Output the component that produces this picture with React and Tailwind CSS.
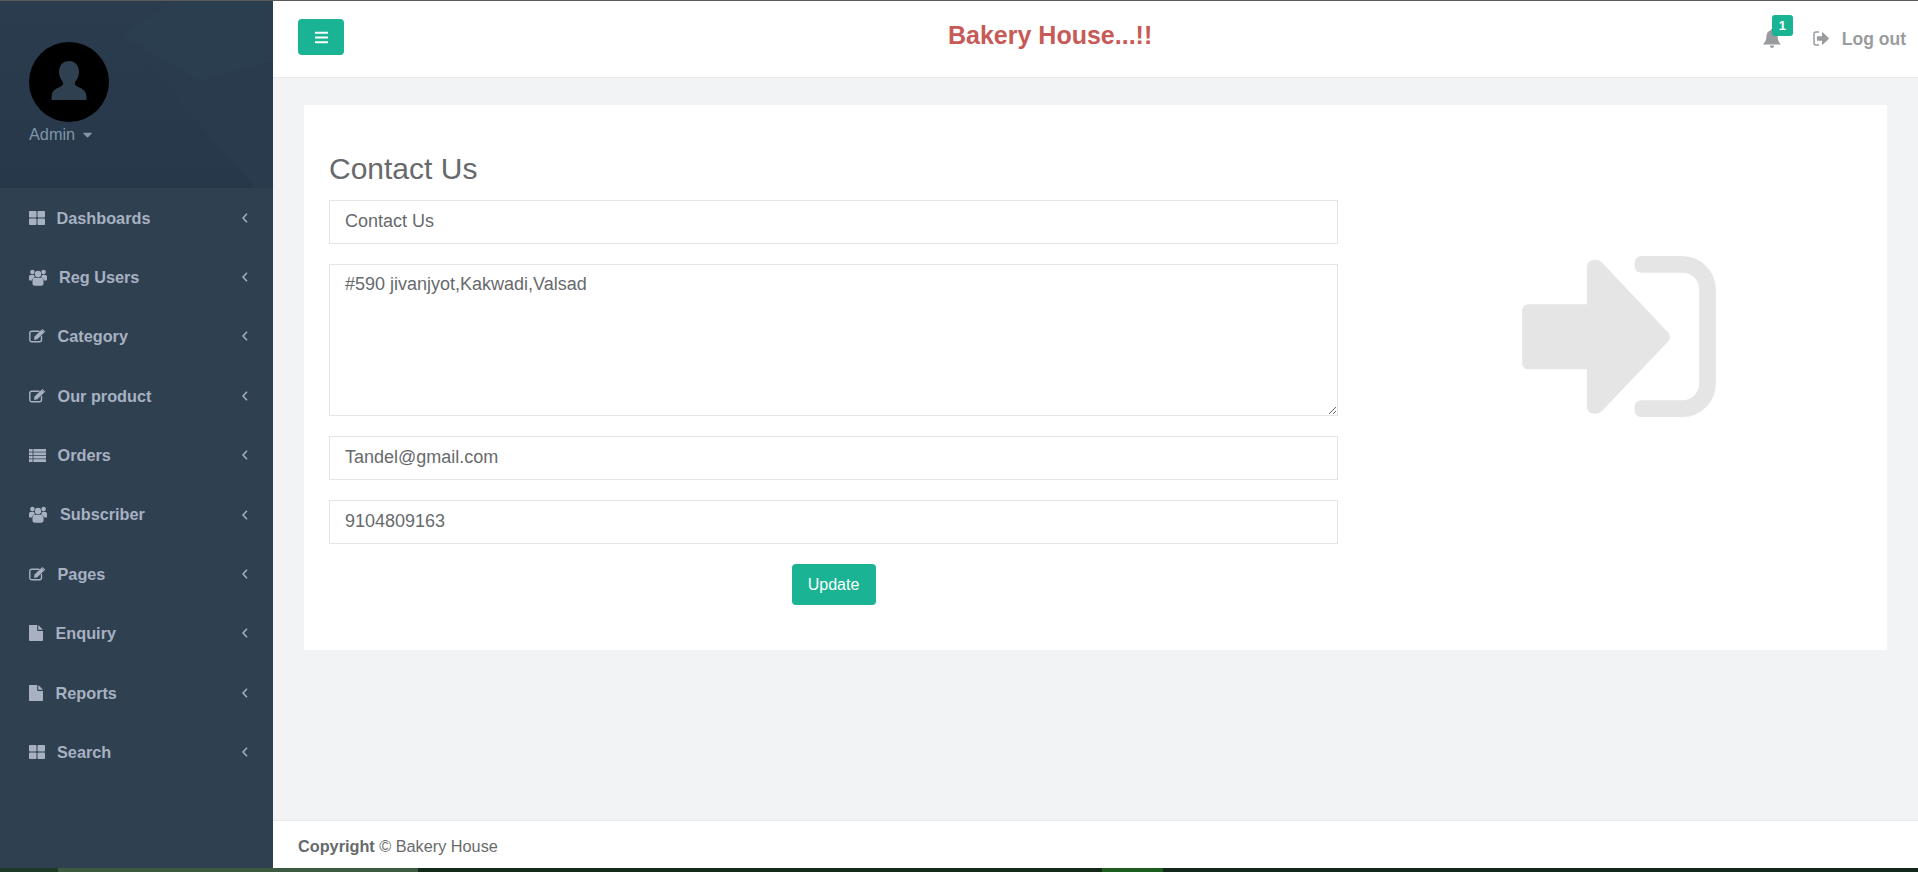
import React from "react";
import { FaThLarge, FaBars, FaCaretDown } from "react-icons/fa";

function UsersIcon() {
  return (
    <svg viewBox="0 0 18 17" className="w-[18px] h-[17px]" fill="currentColor">
      <circle cx="3.4" cy="3.1" r="2.3" />
      <circle cx="14.6" cy="3.1" r="2.3" />
      <circle cx="9" cy="5" r="3.2" />
      <path d="M0 7.6C0 6.6.8 6 1.8 6H5c.1.9.5 1.6 1 2.2-1.7.5-2.7 1.6-3 3.3H1.2C.4 11.5 0 11 0 10.2zM18 7.6c0-1-.8-1.6-1.8-1.6H13c-.1.9-.5 1.6-1 2.2 1.7.5 2.7 1.6 3 3.3h1.8c.8 0 1.2-.5 1.2-1.3z" />
      <path d="M5.8 8.8h6.4c1.6 0 2.3 1.4 2.3 3.4v2.4c0 1.3-.9 2.1-2.1 2.1H5.6c-1.2 0-2.1-.8-2.1-2.1v-2.4c0-2 .7-3.4 2.3-3.4z" />
    </svg>
  );
}

function EditIcon() {
  return (
    <svg viewBox="0 0 17 14" className="w-[17px] h-[14px]" fill="none">
      <path d="M12.5 7.5v3.2c0 1.2-.8 2-2 2H2.8c-1.2 0-2-.8-2-2V4.2c0-1.2.8-2 2-2h7.2" stroke="currentColor" strokeWidth="1.4" strokeLinecap="round" />
      <path d="M5.5 7.6L12.6 .8l2.7 2.6-7 6.9-3.2.6z" fill="currentColor" />
      <path d="M13.4 0l3 2.8-.7.7-3-2.8z" fill="currentColor" />
    </svg>
  );
}

function ListIcon() {
  return (
    <svg viewBox="0 0 17 13" className="w-[17px] h-[13px]" fill="currentColor">
      <rect x="0" y="0" width="3.6" height="2.7" />
      <rect x="4.4" y="0" width="12.6" height="2.7" />
      <rect x="0" y="3.4" width="3.6" height="2.7" />
      <rect x="4.4" y="3.4" width="12.6" height="2.7" />
      <rect x="0" y="6.8" width="3.6" height="2.7" />
      <rect x="4.4" y="6.8" width="12.6" height="2.7" />
      <rect x="0" y="10.2" width="3.6" height="2.8" />
      <rect x="4.4" y="10.2" width="12.6" height="2.8" />
    </svg>
  );
}

function FileIcon() {
  return (
    <svg viewBox="0 0 14 16" className="w-[14px] h-[16px]" fill="currentColor">
      <path d="M.8 0H8.2V5.2C8.2 5.8 8.6 6 9 6H14V15.2C14 15.7 13.7 16 13.2 16H.8C.3 16 0 15.7 0 15.2V.8C0 .3.3 0 .8 0z" />
      <path d="M9.3 0L14 4.8H9.3z" />
    </svg>
  );
}

function BellIcon() {
  return (
    <svg viewBox="0 0 18 19" className="w-[18px] h-[19px]" fill="currentColor">
      <path d="M9 0c.9 0 1.4.6 1.4 1.6 2.8.6 4.1 3 4.2 6 .1 3.400 1 5.400 3.400 7.900H0C2.400 13 3.300 11 3.400 7.600c.1-3 1.400-5.400 4.200-6C7.600.6 8.100 0 9 0z" />
      <path d="M6.800 16.500h4.400c0 1.400-1 2.500-2.200 2.500s-2.200-1.100-2.200-2.500z" />
    </svg>
  );
}

function LogoutIcon() {
  return (
    <svg viewBox="0 0 16 15" className="w-[16px] h-[15px]" fill="none">
      <path d="M5.500 1H3C1.800 1 1 1.800 1 3v9c0 1.200.8 2 2 2h2.500" stroke="currentColor" strokeWidth="1.500" strokeLinecap="round" />
      <path d="M4.500 5.200H9V1.800c0-.5.5-.7.9-.4L15.700 7c.3.300.3.700 0 1l-5.800 5.600c-.4.3-.9.1-.9-.4V9.800H4.500c-.4 0-.6-.3-.6-.6V5.800c0-.3.2-.6.6-.6z" fill="currentColor" />
    </svg>
  );
}

function Chevron() {
  return (
    <svg viewBox="0 0 6 10" className="w-[6px] h-[10px]" fill="none">
      <path d="M5 .8L1 5l4 4.200" stroke="currentColor" strokeWidth="1.500" />
    </svg>
  );
}

const items = [
  { label: "Dashboards", icon: <FaThLarge size={16} />, box: "w-[27.5px]" },
  { label: "Reg Users", icon: <UsersIcon />, box: "w-[30px]" },
  { label: "Category", icon: <EditIcon />, box: "w-[28.5px]" },
  { label: "Our product", icon: <EditIcon />, box: "w-[28.5px]" },
  { label: "Orders", icon: <ListIcon />, box: "w-[28.5px]" },
  { label: "Subscriber", icon: <UsersIcon />, box: "w-[31px]" },
  { label: "Pages", icon: <EditIcon />, box: "w-[28.5px]" },
  { label: "Enquiry", icon: <FileIcon />, box: "w-[26.5px]" },
  { label: "Reports", icon: <FileIcon />, box: "w-[26.5px]" },
  { label: "Search", icon: <FaThLarge size={16} />, box: "w-[28px]" },
];

function Person() {
  return (
    <svg viewBox="0 0 80 80" className="w-20 h-20">
      <circle cx="40" cy="40" r="40" fill="#000" />
      <path d="M40 19c-6 0-10 4.500-10 11 0 4 1.500 7 3.500 9.500 1 1.500 1 3.500-1 4.500-5 2.500-8.500 4-9.500 8-.5 2-.5 4-.5 6h35c0-2 0-4-.5-6-1-4-4.500-5.500-9.500-8-2-1-2-3-1-4.500 2-2.500 3.500-5.500 3.500-9.500 0-6.500-4-11-10-11z" fill="#2f4050" />
    </svg>
  );
}

function BigIcon() {
  return (
    <svg viewBox="0 0 581 483" className="w-[194px] h-[161px]" fill="#e5e5e5">
      <rect x="0" y="145" width="210" height="195" rx="18" />
      <path d="M194 35Q194 11 220 11Q232 11 240 20L440 232Q447 243 440 254L240 464Q232 473 218 473Q194 473 194 449Z" />
      <path d="M360 0H480A101 101 0 0 1 581 100V383A100 100 0 0 1 481 483H360Q337 483 337 460V456Q337 433 360 433H481A50 50 0 0 0 531 383V100A50 50 0 0 0 481 50H360Q337 50 337 27Q337 0 360 0Z" />
    </svg>
  );
}

const field = "block w-full h-11 border border-[#e5e6e7] bg-white px-[15px] pb-[2px] text-[18px] text-[#676a6c] outline-none";

export default function App() {
  return (
    <div className="w-[1918px] h-[872px] overflow-hidden flex flex-col bg-[#2f4050] font-['Liberation_Sans',Arial,sans-serif] text-[#676a6c]">
      <div className="h-px shrink-0 bg-[#5a5a5a]" />
      <div className="flex-1 min-h-0 flex">
        <aside className="w-[273px] shrink-0 bg-[#2f4050] text-[#a7b1c2]">
          <div className="relative h-[187px] overflow-hidden">
            <svg className="absolute inset-0 w-full h-full" viewBox="0 0 273 187" preserveAspectRatio="none">
              <defs>
                <linearGradient id="hdr" x1="0" y1="0" x2="0" y2="1">
                  <stop offset="0" stopColor="#2a3c4d" />
                  <stop offset="1" stopColor="#26384a" />
                </linearGradient>
              </defs>
              <rect width="273" height="187" fill="url(#hdr)" />
              <polygon points="122,35 273,-10 273,187 255,187" fill="#293b4c" />
              <polygon points="122,35 170,0 273,0 273,60 200,80" fill="#2b3e4f" />
            </svg>
            <div className="relative pt-[41px] pl-[29px]">
              <Person />
              <div className="flex items-center gap-[5px] text-[16.25px] leading-6 text-[#8095a8]">
                <span>Admin</span>
                <FaCaretDown size={15} />
              </div>
            </div>
          </div>
          <nav className="flex flex-col">
            {items.map(({ label, icon, box }) => (
              <div key={label} className="h-[59.4px] pl-[29px] pr-[25px] flex items-center text-[16.25px] font-bold">
                <span className={`${box} shrink-0 flex items-center`}>{icon}</span>
                <span className="flex-1">{label}</span>
                <Chevron />
              </div>
            ))}
          </nav>
        </aside>

        <div className="flex-1 min-w-0 flex flex-col bg-[#f2f3f5]">
          <header className="relative h-[77px] shrink-0 bg-white border-b border-[#e7eaec] flex items-center justify-between pl-[25px] pr-[12px]">
            <button className="w-[46px] h-9 -mt-[4px] rounded bg-[#1ab394] text-white flex items-center justify-center">
              <FaBars size={15} />
            </button>
            <h1 className="absolute left-[675px] top-[17px] text-[25px] leading-[34px] font-bold text-[#c75a57]">Bakery House...!!</h1>
            <div className="flex items-center text-[#999c9e] -mt-[1px]">
              <div className="relative mr-[32px]">
                <BellIcon />
                <span className="absolute -top-[14px] left-[9px] w-[21px] h-[21px] rounded-[3px] bg-[#1ab394] text-white text-[13px] leading-[21px] font-bold text-center">1</span>
              </div>
              <LogoutIcon />
              <span className="ml-[13px] text-[17.5px] leading-6 font-bold">Log out</span>
            </div>
          </header>

          <main className="flex-1 min-h-0 pt-[27px] pl-[31px] pr-[31px]">
            <div className="h-[545px] bg-white pt-[47px] pl-[25px] pr-[25px] flex">
              <div className="w-[1009px] shrink-0 flex flex-col">
                <h2 className="text-[30px] leading-[33px] font-normal text-[#676a6c] mb-[15px]">Contact Us</h2>
                <input className={field} defaultValue="Contact Us" />
                <textarea className="block w-full h-[152px] mt-5 border border-[#e5e6e7] bg-white px-[15px] py-[7px] text-[18px] leading-[24px] text-[#676a6c] outline-none" defaultValue="#590 jivanjyot,Kakwadi,Valsad" />
                <input className={`${field} mt-5`} defaultValue="Tandel@gmail.com" />
                <input className={`${field} mt-5`} defaultValue="9104809163" />
                <div className="flex justify-center mt-5">
                  <button className="w-[84px] h-[41px] rounded bg-[#1ab394] text-white text-[16px]">Update</button>
                </div>
              </div>
              <div className="flex-1 pt-[104px] pl-[184px]">
                <BigIcon />
              </div>
            </div>
          </main>

          <footer className="h-[48px] shrink-0 bg-white border-t border-[#e7eaec] pl-[25px] pt-[3px] flex items-center text-[16.25px]">
            <strong className="font-bold">Copyright</strong>
            <span>&nbsp;© Bakery House</span>
          </footer>
        </div>
      </div>
      <div className="h-1 shrink-0 flex bg-[#13281b]">
        <div className="w-[58px] bg-[#1c3a26]" />
        <div className="w-[360px] bg-[#3c5a40]" />
        <div className="w-[684px] bg-[#142a18]" />
        <div className="w-[61px] bg-[#1b5e20]" />
      </div>
    </div>
  );
}
